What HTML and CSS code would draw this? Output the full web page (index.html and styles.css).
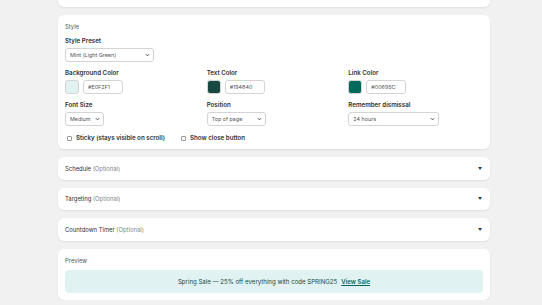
FILE: index.html
```html
<!DOCTYPE html>
<html lang="en">
<head>
    <meta charset="UTF-8">
    <meta name="viewport" content="width=device-width, initial-scale=1.0">
    <title>Announcement Bar Settings</title>
    <link rel="stylesheet" href="styles.css">
</head>
<body>
    <div class="page">
        <div class="card card-top"></div>

        <div class="card">
            <div class="card-title">Style</div>
            <div class="form-group">
                <label for="preset">Style Preset</label>
                <select id="preset" class="select select-preset">
                    <option>Mint (Light Green)</option>
                </select>
            </div>

            <div class="grid">
                <div class="form-group">
                    <label>Background Color</label>
                    <div class="color-row">
                        <span class="swatch swatch-bg"></span>
                        <input class="hex" type="text" value="#E0F2F1">
                    </div>
                </div>
                <div class="form-group">
                    <label>Text Color</label>
                    <div class="color-row">
                        <span class="swatch swatch-text"></span>
                        <input class="hex" type="text" value="#194840">
                    </div>
                </div>
                <div class="form-group">
                    <label>Link Color</label>
                    <div class="color-row">
                        <span class="swatch swatch-link"></span>
                        <input class="hex" type="text" value="#00695C">
                    </div>
                </div>

                <div class="form-group">
                    <label>Font Size</label>
                    <select class="select select-size">
                        <option>Medium</option>
                    </select>
                </div>
                <div class="form-group">
                    <label>Position</label>
                    <select class="select select-position">
                        <option>Top of page</option>
                    </select>
                </div>
                <div class="form-group">
                    <label>Remember dismissal</label>
                    <select class="select select-remember">
                        <option>24 hours</option>
                    </select>
                </div>
            </div>

            <div class="checks">
                <label class="check"><input type="checkbox"> Sticky (stays visible on scroll)</label>
                <label class="check"><input type="checkbox"> Show close button</label>
            </div>
        </div>

        <div class="card collapse">
            <span>Schedule <em>(Optional)</em></span>
            <span class="arrow">&#9660;</span>
        </div>
        <div class="card collapse">
            <span>Targeting <em>(Optional)</em></span>
            <span class="arrow">&#9660;</span>
        </div>
        <div class="card collapse">
            <span>Countdown Timer <em>(Optional)</em></span>
            <span class="arrow">&#9660;</span>
        </div>

        <div class="card card-preview">
            <div class="card-title">Preview</div>
            <div class="banner">
                Spring Sale — 25% off everything with code SPRING25
                <a href="#" class="banner-link">View Sale</a>
            </div>
        </div>
    </div>
</body>
</html>
```

FILE: styles.css
```css
body {
    font-family: Inter, 'Liberation Sans', sans-serif;
    background-color: #f1f1f1;
    margin: 0;
    padding: 0;
    color: #303030;
}
.page {
    width: 432px;
    margin: -8px 0 0 58px;
    display: flex;
    flex-direction: column;
    gap: 8px;
}
.card {
    background-color: white;
    border-radius: 6px;
    box-shadow: 0 1px 2px rgba(0, 0, 0, 0.08);
    padding: 7px;
}
.card-top {
    height: 1px;
}
.card-title {
    font-size: 5.9px;
    line-height: 8px;
    color: #555;
    margin: 1px 0 6px;
}
.card-preview {
    padding-top: 7px;
}
.card-preview .card-title {
    margin-bottom: 5px;
}
.form-group {
    margin-bottom: 7px;
}
label {
    display: block;
    font-size: 6.2px;
    line-height: 8px;
    font-weight: 600;
    color: #303030;
    margin-bottom: 3px;
}
.select {
    appearance: none;
    -webkit-appearance: none;
    display: block;
    height: 14px;
    font-family: inherit;
    font-size: 5.4px;
    color: #555;
    border: 1px solid #d4d4d4;
    border-radius: 3px;
    background-color: white;
    background-image: url("data:image/svg+xml,%3Csvg xmlns='http://www.w3.org/2000/svg' width='6' height='4' viewBox='0 0 6 4'%3E%3Cpath d='M1 1l2 2 2-2' fill='none' stroke='%23333' stroke-width='1'/%3E%3C/svg%3E");
    background-repeat: no-repeat;
    background-position: right 3px center;
    background-size: 5px 4px;
    padding: 0 4px;
}
.select-preset {
    width: 89px;
}
.select-size {
    width: 39px;
}
.select-position {
    width: 59px;
}
.select-remember {
    width: 91px;
}
.grid {
    display: grid;
    grid-template-columns: repeat(3, 1fr);
    column-gap: 7px;
}
.color-row {
    display: flex;
    align-items: center;
    gap: 4px;
}
.swatch {
    width: 14px;
    height: 14px;
    border-radius: 3px;
    box-sizing: border-box;
    border: 1px solid #d4d4d4;
}
.swatch-bg {
    background-color: #e0f2f1;
}
.swatch-text {
    background-color: #194840;
}
.swatch-link {
    background-color: #00695c;
}
.hex {
    width: 40px;
    height: 14px;
    box-sizing: border-box;
    border: 1px solid #d4d4d4;
    border-radius: 3px;
    font-family: inherit;
    font-size: 5.4px;
    color: #555;
    padding: 0 4px;
}
.checks {
    display: flex;
    gap: 16px;
    margin: 1px 0 0 2px;
}
.check {
    display: flex;
    align-items: center;
    gap: 4px;
    margin: 0;
}
.check input {
    appearance: none;
    -webkit-appearance: none;
    width: 5px;
    height: 5px;
    margin: 0;
    border: 1px solid #999;
    border-radius: 1px;
    background: white;
}
.collapse {
    display: flex;
    justify-content: space-between;
    align-items: center;
    height: 8.6px;
    font-size: 5.9px;
    color: #303030;
}
.collapse em {
    font-style: normal;
    color: #888;
}
.arrow {
    font-size: 4px;
    margin-right: 1px;
}
.banner {
    background-color: #e0f2f1;
    border-radius: 4px;
    height: 23px;
    display: flex;
    align-items: center;
    justify-content: center;
    gap: 4px;
    font-size: 6.1px;
    color: #194840;
}
.banner-link {
    color: #00695c;
    font-weight: 600;
}
```
